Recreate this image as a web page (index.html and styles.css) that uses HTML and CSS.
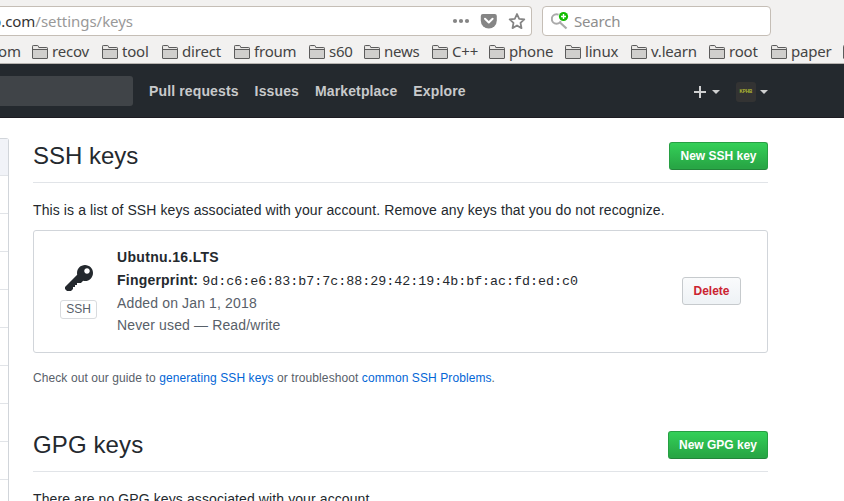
FILE: index.html
```
<!DOCTYPE html>
<html lang="en">
<head>
<meta charset="utf-8">
<title>SSH and GPG keys</title>
<link rel="stylesheet" href="styles.css">
</head>
<body>
<svg class="defs" aria-hidden="true">
  <symbol id="folder" viewBox="0 0 16 14">
    <path d="M.5 13V1.300Q.5.5 1.300.5h4.200q.7 0 .9.7l.4 1.300h7.900q.8 0 .8.8V13q0 .5-.5.5H1q-.5 0-.5-.5z" fill="#d0cfcd" stroke="#5c5c5c"/>
    <path d="M1.200 1.200h4.400l.8 2h8.400v1H1.200z" fill="#eceae8"/>
    <path d="M1 4.500h14" stroke="#5c5c5c"/>
  </symbol>
</svg>
<div class="toolbar">
  <div class="address"><span class="url"><span class="host">b.com</span>/settings/keys</span>
    <svg class="address-icons" width="76" height="20" viewBox="0 0 76 20">
      <g fill="#858585"><circle cx="3" cy="10" r="2.1"/><circle cx="9" cy="10" r="2.1"/><circle cx="15" cy="10" r="2.1"/>
      <path d="M30 3h12q2 0 2 2v4.500a8 8 0 0 1-16 0V5q0-2 2-2z" transform="translate(.8)"/></g>
      <path d="M33 7.800l3.800 3.700 3.800-3.700" fill="none" stroke="#fff" stroke-width="2" stroke-linecap="round" stroke-linejoin="round"/>
      <path d="M65 3l2.200 4.800 5.100.6-3.800 3.500 1 5.200-4.500-2.600-4.500 2.600 1-5.200-3.800-3.500 5.100-.6z" fill="none" stroke="#858585" stroke-width="1.800" stroke-linejoin="round"/>
    </svg>
  </div>
  <div class="search">
    <svg width="20" height="20" viewBox="0 0 20 20"><circle cx="5.500" cy="8" r="4.700" fill="none" stroke="#aaa" stroke-width="2"/><path d="M9 11.500l6.500 6" stroke="#aaa" stroke-width="2.200"/><circle cx="12.500" cy="5.500" r="5.300" fill="#fff"/><circle cx="12.500" cy="5.500" r="4.600" fill="#12bc00"/><path d="M10 5.500h5M12.500 3v5" stroke="#fff" stroke-width="1.400"/></svg>
    <span>Search</span>
  </div>
</div>
<div class="bookmarks">
  <span class="cut">om</span>
  <span class="bm"><svg><use href="#folder"/></svg>recov</span>
  <span class="bm"><svg><use href="#folder"/></svg>tool</span>
  <span class="bm"><svg><use href="#folder"/></svg>direct</span>
  <span class="bm"><svg><use href="#folder"/></svg>froum</span>
  <span class="bm"><svg><use href="#folder"/></svg>s60</span>
  <span class="bm"><svg><use href="#folder"/></svg>news</span>
  <span class="bm"><svg><use href="#folder"/></svg>C++</span>
  <span class="bm"><svg><use href="#folder"/></svg>phone</span>
  <span class="bm"><svg><use href="#folder"/></svg>linux</span>
  <span class="bm"><svg><use href="#folder"/></svg>v.learn</span>
  <span class="bm"><svg><use href="#folder"/></svg>root</span>
  <span class="bm"><svg><use href="#folder"/></svg>paper</span>
  <span class="bm"><svg><use href="#folder"/></svg></span>
</div>
<header class="header">
  <div class="site-search"></div>
  <nav class="nav"><a>Pull requests</a><a>Issues</a><a>Marketplace</a><a>Explore</a></nav>
  <div class="user">
    <svg width="12" height="16" viewBox="0 0 12 16" fill="#cfd0d1"><path d="M12 9H7v5H5V9H0V7h5V2h2v5h5v2z"/></svg>
    <i class="caret"></i>
    <span class="avatar">KPHB</span>
    <i class="caret"></i>
  </div>
</header>
<div class="page">
  <aside class="menu"><i class="selected"></i><i></i><i></i><i></i><i></i><i></i><i></i><i></i><i></i><i></i></aside>
  <main class="content">
    <div class="subhead"><h2 class="title-ssh">SSH keys</h2><button class="btn primary ssh">New SSH key</button></div>
    <p class="intro">This is a list of SSH keys associated with your account. Remove any keys that you do not recognize.</p>
    <div class="key-box">
      <div class="key-icon">
        <svg width="28" height="32" viewBox="0 0 14 16" fill="#24292e"><path fill-rule="evenodd" d="M12.830 2.170C12.080 1.420 11.140 1.030 10 1c-1.130.03-2.080.42-2.830 1.170S6.040 3.860 6.010 5c0 .3.03.59.09.89L0 12v1l1 1h2l1-1v-1h1v-1h1v-1h2l1.090-1.110c.3.08.59.11.91.11 1.140-.03 2.080-.42 2.830-1.170S13.970 6.140 14 5c-.03-1.140-.42-2.080-1.170-2.830zM11 5.380c-.77 0-1.380-.61-1.380-1.380 0-.77.61-1.380 1.380-1.380.77 0 1.380.61 1.380 1.380 0 .77-.61 1.380-1.380 1.380z"/></svg>
        <span class="label">SSH</span>
      </div>
      <div class="key-info">
        <strong class="key-name">Ubutnu.16.LTS</strong>
        <div class="finger"><strong>Fingerprint:</strong><code>9d:c6:e6:83:b7:7c:88:29:42:19:4b:bf:ac:fd:ed:c0</code></div>
        <span class="muted added">Added on Jan 1, 2018</span>
        <span class="muted used">Never used — Read/write</span>
      </div>
      <button class="btn danger">Delete</button>
    </div>
    <p class="help">Check out our guide to <a>generating SSH keys</a> or troubleshoot <a>common SSH Problems</a>.</p>
    <div class="subhead gpg-head"><h2 class="title-gpg">GPG keys</h2><button class="btn primary gpg">New GPG key</button></div>
    <p class="intro gpg-intro">There are no GPG keys associated with your account.</p>
  </main>
</div>
</body>
</html>
```
FILE: styles.css
```
* { box-sizing: border-box; }
body { margin: 0; width: 844px; height: 501px; overflow: hidden; background: #fff; color: #24292e; font: 14px/21px "Liberation Sans", Arial, sans-serif; }
.defs { display: none; }
svg { display: block; flex: none; }
.toolbar { height: 41px; padding-top: 6px; display: flex; gap: 10px; background: #f2f1f0; font: 15px/28px "Noto Sans", sans-serif; }
.address { width: 532px; height: 30px; background: #fff; border: 1px solid #c5beb6; border-left: 0; border-radius: 0 4px 4px 0; display: flex; justify-content: space-between; overflow: hidden; padding-right: 3px; align-items: center; }
.url { margin-left: -8px; color: #999; white-space: nowrap; letter-spacing: -.04px; }
.host { color: #333; }
.search { width: 229px; height: 30px; background: #fff; border: 1px solid #c5beb6; border-radius: 4px; display: flex; align-items: center; padding-left: 8px; gap: 3px; color: #8e8e8e; letter-spacing: -.2px; }
.bookmarks { height: 23px; background: #f2f1f0; border-bottom: 1px solid #b6b3b0; display: grid; grid-template-columns: 32px 70px 60px 72px 75px 55px 68px 57px 76px 66px 78px 62px 72px 16px; overflow: hidden; font: 15px/20px "Noto Sans", sans-serif; letter-spacing: -.2px; color: #444; }
.cut { margin-left: -2px; }
.bm { display: flex; gap: 4px; white-space: nowrap; }
.bm svg { width: 16px; height: 14px; margin-top: 4px; }
.header { height: 54px; background: #24292e; display: flex; align-items: center; border-bottom: 1px solid #1d1c22; }
.site-search { width: 133px; height: 30px; background: #404448; border-radius: 0 3px 3px 0; }
.nav { display: flex; gap: 16px; margin: 2px 0 0 16px; font-weight: bold; letter-spacing: .13px; color: #c8c9cb; white-space: nowrap; }
.user { display: flex; align-items: center; margin: 3px 0 0 auto; padding-right: 76px; }
.caret { border: 4px solid transparent; border-top-color: #cfd0d1; border-bottom: 0; margin-left: 6px; }
.avatar { width: 20px; height: 20px; margin-left: 16px; margin-right: -2px; border-radius: 3px; background: #333; color: #b2bb32; font-size: 4.500px; line-height: 20px; font-weight: bold; text-align: center; }
.page { display: flex; height: 383px; overflow: hidden; }
.menu { width: 9px; height: 400px; margin-top: 20px; border: 1px solid #d1d5da; border-left: 0; border-radius: 0 3px 0 0; }
.menu i { display: block; height: 38px; border-bottom: 1px solid #e1e4e8; }
.menu .selected { height: 37px; background: #f1f3f8; }
.content { width: 735px; margin-left: 24px; padding-top: 19px; }
.subhead { height: 46px; border-bottom: 1px solid #e1e4e8; display: flex; justify-content: space-between; align-items: flex-start; }
h2 { margin: 0; font-size: 24px; line-height: 37px; font-weight: normal; white-space: nowrap; }
.title-gpg { letter-spacing: .12px; }
.btn { height: 28px; padding: 0; border-radius: 3px; font: bold 12px/18px "Liberation Sans", Arial, sans-serif; white-space: nowrap; }
.primary { margin-top: 5px; color: #fff; border: 1px solid #279f43; border-bottom-color: #23843a; background: linear-gradient(#34d058, #28a745 90%); }
.ssh { width: 99px; }
.gpg { width: 100px; }
.intro { margin: 17px 0 9px; white-space: nowrap; letter-spacing: .1px; }
.key-box { height: 123px; border: 1px solid #d1d5da; border-radius: 3px; display: flex; }
.key-icon { width: 37px; margin: 32px 0 0 26px; display: flex; flex-direction: column; align-items: center; }
.label { width: 37px; height: 19px; margin-top: 5px; border: 1px solid #d9dbde; border-radius: 3px; color: #586069; font-size: 12px; line-height: 17px; text-align: center; }
.key-info { margin: 15px 0 0 20px; display: flex; flex-direction: column; align-items: flex-start; white-space: nowrap; }
.key-name { height: 23px; line-height: 22px; letter-spacing: .33px; }
.finger { height: 23px; line-height: 22px; display: flex; gap: 4px; }
.finger strong { letter-spacing: .22px; }
.finger code { font: 13.333px/25px "Liberation Mono", monospace; }
.muted { color: #586069; height: 22px; line-height: 22px; letter-spacing: .14px; }
.danger { width: 59px; margin: 46px 26px 0 auto; color: #cb2431; border: 1px solid #c6cacd; background: linear-gradient(#fafbfc, #eff3f6 90%); }
.help { margin: 16px 0 0; font-size: 12px; line-height: 18px; color: #586069; white-space: nowrap; letter-spacing: .09px; }
.help a { color: #0366d6; }
.gpg-head { margin-top: 39px; }
.gpg-intro { margin-top: 17px; }
```
